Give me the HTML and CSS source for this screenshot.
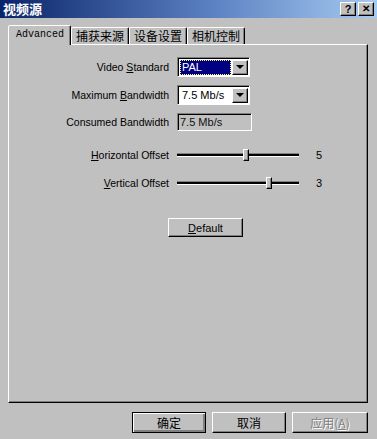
FILE: index.html
```html
<!DOCTYPE html>
<html lang="zh">
<head>
    <meta charset="UTF-8">
    <title>视频源</title>
    <link rel="stylesheet" href="styles.css">
</head>
<body>
    <div class="window">
        <div class="titlebar">
            <span class="title">视频源</span>
            <div class="title-btns">
                <span class="tbtn">?</span>
                <span class="tbtn close">&#x2715;</span>
            </div>
        </div>

        <div class="tabs">
            <div class="tab active">Advanced</div>
            <div class="tab">捕获来源</div>
            <div class="tab">设备设置</div>
            <div class="tab">相机控制</div>
        </div>

        <div class="panel">
            <div class="row">
                <label class="label">Video <u>S</u>tandard</label>
                <div class="select">
                    <span class="value selected">PAL</span>
                    <span class="drop"><span class="arrow"></span></span>
                </div>
            </div>
            <div class="row">
                <label class="label">Maximum <u>B</u>andwidth</label>
                <div class="select">
                    <span class="value">7.5 Mb/s</span>
                    <span class="drop"><span class="arrow"></span></span>
                </div>
            </div>
            <div class="row">
                <label class="label">Consumed Bandwidth</label>
                <div class="readonly">7.5 Mb/s</div>
            </div>

            <div class="row slider-row first-slider">
                <label class="label"><u>H</u>orizontal Offset</label>
                <div class="slider">
                    <div class="track"></div>
                    <div class="thumb" style="left: 66px;"></div>
                </div>
                <span class="num">5</span>
            </div>
            <div class="row slider-row">
                <label class="label"><u>V</u>ertical Offset</label>
                <div class="slider">
                    <div class="track"></div>
                    <div class="thumb" style="left: 89px;"></div>
                </div>
                <span class="num">3</span>
            </div>

            <button class="btn default-btn"><u>D</u>efault</button>
        </div>

        <div class="footer">
            <button class="btn cn ok">确定</button>
            <button class="btn cn">取消</button>
            <button class="btn cn disabled">应用(<u>A</u>)</button>
        </div>
    </div>
</body>
</html>
```

FILE: styles.css
```css
body {
    margin: 0;
    font-family: 'Liberation Sans', Arial, 'Noto Sans CJK SC', sans-serif;
    font-size: 10.5px;
    color: #000;
}

.window {
    width: 377px;
    height: 439px;
    background: #c0c0c0;
    display: flex;
    flex-direction: column;
    overflow: hidden;
}

.titlebar {
    height: 18px;
    background: linear-gradient(to right, #0a246a, #5a7fc0 55%, #a6caf0);
    display: flex;
    align-items: center;
    justify-content: space-between;
    padding: 0 3px 0 3px;
}

.title {
    color: #fff;
    font-family: 'Noto Sans CJK SC', sans-serif;
    font-weight: bold;
    font-size: 13px;
    line-height: 18px;
}

.title-btns {
    display: flex;
    gap: 2px;
}

.tbtn {
    width: 14px;
    height: 12px;
    background: #c0c0c0;
    border: 1px solid;
    border-color: #fff #000 #000 #fff;
    box-shadow: inset -1px -1px #808080;
    font-weight: bold;
    font-size: 11px;
    line-height: 12px;
    text-align: center;
    color: #000;
}

.tbtn.close {
    font-size: 10px;
}

.tabs {
    display: flex;
    align-items: flex-end;
    margin: 6px 0 0 8px;
    height: 20px;
    position: relative;
    z-index: 1;
}

.tab {
    height: 16px;
    padding: 0 4px;
    border: 1px solid;
    border-bottom: none;
    border-color: #fff #000 transparent #fff;
    border-radius: 2px 2px 0 0;
    font-family: 'Noto Sans CJK SC', sans-serif;
    font-size: 12px;
    line-height: 16px;
    box-shadow: inset -1px 0 #808080;
}

.tab.active {
    height: 19px;
    margin-bottom: -1px;
    padding: 0 6px 0 7px;
    background: #c0c0c0;
    font-family: 'Liberation Mono', monospace;
    font-size: 10px;
    line-height: 18px;
}

.panel {
    margin: 0 9px 0 8px;
    height: 345px;
    padding-top: 12px;
    border: 1px solid;
    border-color: #fff #000 #000 #fff;
    box-shadow: inset -1px -1px #808080;
}

.row {
    display: flex;
    align-items: center;
    margin-bottom: 8px;
}

.label {
    width: 160px;
    text-align: right;
    margin-right: 8px;
}

.select {
    width: 69px;
    height: 16px;
    padding: 1px;
    background: #fff;
    border: 1px solid;
    border-color: #808080 #fff #fff #808080;
    box-shadow: inset 1px 1px #000;
    display: flex;
    align-items: center;
}

.value {
    flex: 1;
    height: 15px;
    line-height: 15px;
    padding-left: 2px;
    margin-left: 1px;
    font-size: 11px;
}

.value.selected {
    background: #000080;
    color: #fff;
    outline: 1px dotted #ffff80;
    outline-offset: -1px;
}

.drop {
    width: 14px;
    height: 13px;
    margin-left: 1px;
    background: #c0c0c0;
    border: 1px solid;
    border-color: #fff #000 #000 #fff;
    box-shadow: inset -1px -1px #808080;
    display: flex;
    align-items: center;
    justify-content: center;
}

.arrow {
    width: 0;
    height: 0;
    border-left: 4px solid transparent;
    border-right: 4px solid transparent;
    border-top: 4px solid #000;
}

.readonly {
    width: 69px;
    height: 16px;
    padding: 0 2px;
    border: 1px solid;
    border-color: #808080 #fff #fff #808080;
    box-shadow: inset 1px 1px #000;
    line-height: 16px;
    font-size: 11px;
    color: #111;
}

.slider-row {
    height: 20px;
    margin-bottom: 8px;
}

.first-slider {
    margin-top: 14px;
}

.slider {
    position: relative;
    width: 122px;
    height: 20px;
}

.track {
    position: absolute;
    left: 0;
    right: 0;
    top: 8px;
    height: 2px;
    border-top: 1px solid #808080;
    border-bottom: 1px solid #fff;
    background: #000;
}

.thumb {
    position: absolute;
    top: 4px;
    width: 4px;
    height: 10px;
    background: #c0c0c0;
    border: 1px solid;
    border-color: #fff #000 #000 #fff;
    box-shadow: inset -1px -1px #808080;
}

.num {
    margin-left: 17px;
    font-size: 11px;
}

.btn {
    font-family: 'Liberation Sans', Arial, sans-serif;
    font-size: 11px;
    background: #c0c0c0;
    border: 1px solid;
    border-color: #fff #000 #000 #fff;
    box-shadow: inset -1px -1px #808080;
    padding: 0;
    color: #000;
}

.default-btn {
    display: block;
    width: 75px;
    height: 19px;
    margin: 25px 0 0 159px;
}

.footer {
    display: flex;
    justify-content: flex-end;
    gap: 6px;
    padding-right: 9px;
    margin-top: 9px;
}

.btn.cn {
    width: 74px;
    height: 21px;
    font-family: 'Noto Sans CJK SC', sans-serif;
    font-size: 12px;
}

.btn.ok {
    border: 1px solid #000;
    box-shadow: inset 1px 1px #fff, inset -2px -2px #808080;
}

.btn.disabled {
    width: 76px;
    color: #808080;
    text-shadow: 1px 1px #fff;
}
```
